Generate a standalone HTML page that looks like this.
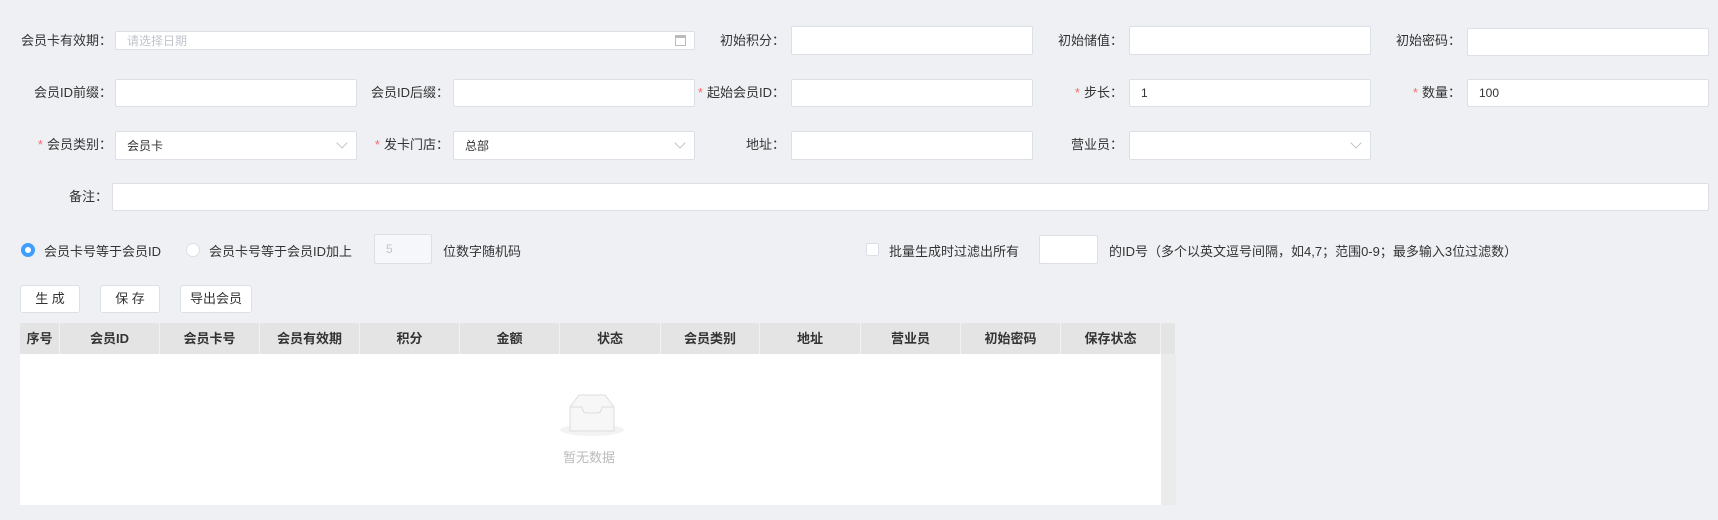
<!DOCTYPE html>
<html><head><meta charset="utf-8"><style>
*{box-sizing:border-box;margin:0;padding:0}
body{width:1718px;height:520px;background:#eff0f4;font-family:"Liberation Sans","Noto Sans CJK SC",sans-serif;font-size:13px;color:#333;position:relative;overflow:hidden}
.a{position:absolute;white-space:nowrap}
.lbl{position:absolute;text-align:right;white-space:nowrap;line-height:16px}
.lbl b{color:#f56c6c;font-weight:normal;margin-right:4px}
.in{position:absolute;background:#fff;border:1px solid #dcdfe6;border-radius:2px;font-size:12px;padding-left:11px;display:flex;align-items:center}
.arr{position:absolute;right:10px;top:7px;width:8px;height:8px;border-right:1px solid #c0c4cc;border-bottom:1px solid #c0c4cc;transform:rotate(45deg)}
.btn{position:absolute;background:#fff;border:1px solid #dcdfe6;border-radius:3px;top:285px;height:28px;line-height:26px;text-align:center;font-size:13px}
.th{position:absolute;top:323px;height:31px;line-height:31px;text-align:center;font-weight:bold;background:#e4e4e4;border-right:1px solid #f2f2f2;font-size:13px}
</style></head><body>
<div class="lbl" style="right:1606px;top:33px">会员卡有效期：</div>
<div class="in" style="left:115px;top:31px;width:580px;height:19px;color:#c0c4cc">请选择日期<span class="a" style="right:8px;top:3px;width:11px;height:11px;border:1px solid #bbb;border-top-width:3px"></span></div>
<div class="lbl" style="right:933px;top:33px">初始积分：</div>
<div class="in" style="left:791px;top:26px;width:242px;height:29px"></div>
<div class="lbl" style="right:595px;top:33px">初始储值：</div>
<div class="in" style="left:1129px;top:26px;width:242px;height:29px"></div>
<div class="lbl" style="right:257px;top:33px">初始密码：</div>
<div class="in" style="left:1467px;top:28px;width:242px;height:28px"></div>

<div class="lbl" style="right:1606px;top:85px">会员ID前缀：</div>
<div class="in" style="left:115px;top:79px;width:242px;height:28px"></div>
<div class="lbl" style="right:1269px;top:85px">会员ID后缀：</div>
<div class="in" style="left:453px;top:79px;width:242px;height:28px"></div>
<div class="lbl" style="right:933px;top:85px"><b>*</b>起始会员ID：</div>
<div class="in" style="left:791px;top:79px;width:242px;height:28px"></div>
<div class="lbl" style="right:595px;top:85px"><b>*</b>步长：</div>
<div class="in" style="left:1129px;top:79px;width:242px;height:28px">1</div>
<div class="lbl" style="right:257px;top:85px"><b>*</b>数量：</div>
<div class="in" style="left:1467px;top:79px;width:242px;height:28px">100</div>

<div class="lbl" style="right:1606px;top:137px"><b>*</b>会员类别：</div>
<div class="in" style="left:115px;top:131px;width:242px;height:29px">会员卡<span class="arr"></span></div>
<div class="lbl" style="right:1269px;top:137px"><b>*</b>发卡门店：</div>
<div class="in" style="left:453px;top:131px;width:242px;height:29px">总部<span class="arr"></span></div>
<div class="lbl" style="right:933px;top:137px">地址：</div>
<div class="in" style="left:791px;top:131px;width:242px;height:29px"></div>
<div class="lbl" style="right:595px;top:137px">营业员：</div>
<div class="in" style="left:1129px;top:131px;width:242px;height:29px"><span class="arr"></span></div>

<div class="lbl" style="right:1610px;top:189px">备注：</div>
<div class="in" style="left:112px;top:183px;width:1597px;height:28px"></div>

<div class="a" style="left:21px;top:243px;width:14px;height:14px;border-radius:50%;background:#409eff"><div class="a" style="left:4px;top:4px;width:6px;height:6px;border-radius:50%;background:#fff"></div></div>
<div class="a" style="left:44px;top:241px">会员卡号等于会员ID</div>
<div class="a" style="left:186px;top:243px;width:14px;height:14px;border-radius:50%;background:#fff;border:1px solid #dcdfe6"></div>
<div class="a" style="left:209px;top:241px">会员卡号等于会员ID加上</div>
<div class="in" style="left:374px;top:234px;width:58px;height:30px;background:#f5f7fa;color:#c0c4cc">5</div>
<div class="a" style="left:443px;top:241px">位数字随机码</div>
<div class="a" style="left:866px;top:243px;width:13px;height:13px;background:#fff;border:1px solid #dcdfe6;border-radius:2px"></div>
<div class="a" style="left:889px;top:241px">批量生成时过滤出所有</div>
<div class="in" style="left:1039px;top:235px;width:59px;height:29px"></div>
<div class="a" style="left:1109px;top:241px">的ID号（多个以英文逗号间隔，如4,7；范围0-9；最多输入3位过滤数）</div>

<div class="btn" style="left:20px;width:60px">生 成</div>
<div class="btn" style="left:100px;width:60px">保 存</div>
<div class="btn" style="left:180px;width:72px">导出会员</div>

<div class="a" style="left:20px;top:323px;width:1156px;height:182px;background:#fff"></div>
<div class="a" style="left:1161px;top:323px;width:15px;height:182px;background:#ebebeb"></div>
<div class="th" style="left:20px;width:40px">序号</div>
<div class="th" style="left:60px;width:100px">会员ID</div>
<div class="th" style="left:160px;width:100px">会员卡号</div>
<div class="th" style="left:260px;width:100px">会员有效期</div>
<div class="th" style="left:360px;width:100px">积分</div>
<div class="th" style="left:460px;width:100px">金额</div>
<div class="th" style="left:560px;width:101px">状态</div>
<div class="th" style="left:661px;width:99px">会员类别</div>
<div class="th" style="left:760px;width:101px">地址</div>
<div class="th" style="left:861px;width:100px">营业员</div>
<div class="th" style="left:961px;width:100px">初始密码</div>
<div class="th" style="left:1061px;width:100px">保存状态</div>
<div class="th" style="left:1161px;width:15px;background:#e4e4e4"></div>

<div class="a" style="left:560px;top:424px;width:64px;height:12px;border-radius:50%;background:#f3f3f3"></div>
<svg class="a" style="left:569px;top:393px" width="46" height="42" viewBox="0 0 46 42"><path d="M1 14 L10 2 H36 L45 14 V38 H1 Z" fill="#f7f7f7" stroke="#ddd"/><path d="M1 14 H13 Q14 20 17 20 H29 Q32 20 33 14 H45" fill="none" stroke="#ddd"/></svg>
<div class="a" style="left:563px;top:447px;color:#bbb;font-size:13px">暂无数据</div>
</body></html>
